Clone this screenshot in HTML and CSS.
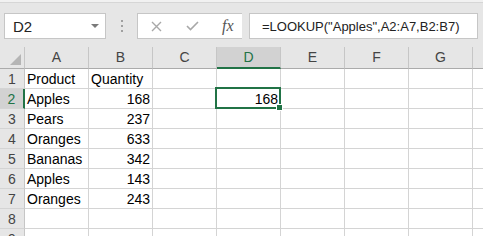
FILE: index.html
```html
<!DOCTYPE html>
<html lang="en">

<head>
  <meta charset="UTF-8" />
  <title>LOOKUP - Excel</title>
  <link rel="stylesheet" href="styles.css">
</head>

<body>
  <!-- formula bar -->
  <div class="toolbar">
    <div class="name-box">
      <span>D2</span>
      <span class="caret"></span>
    </div>
    <div class="grip"><i></i><i></i><i></i></div>
    <div class="fx-box">
      <svg class="btn-cancel" width="11" height="11" viewBox="0 0 11 11">
        <path d="M1 1 L10 10 M10 1 L1 10" stroke="#a8a8a8" stroke-width="1.4" fill="none" />
      </svg>
      <svg class="btn-enter" width="13" height="10" viewBox="0 0 13 10">
        <path d="M1 5 L4.5 8.5 L12 1" stroke="#a8a8a8" stroke-width="1.6" fill="none" />
      </svg>
      <span class="fx">fx</span>
    </div>
    <div class="formula">=LOOKUP("Apples",A2:A7,B2:B7)</div>
  </div>

  <!-- sheet -->
  <div class="sheet">
    <div class="corner">
      <svg width="11" height="11" viewBox="0 0 11 11"><path d="M11 0 L11 11 L0 11 Z" fill="#b5b5b5" /></svg>
    </div>
    <div class="col-head">A</div>
    <div class="col-head">B</div>
    <div class="col-head">C</div>
    <div class="col-head active">D</div>
    <div class="col-head">E</div>
    <div class="col-head">F</div>
    <div class="col-head">G</div>
    <div class="col-head"></div>

    <div class="row-head">1</div>
    <div class="cell">Product</div>
    <div class="cell">Quantity</div>
    <div class="cell"></div><div class="cell"></div><div class="cell"></div><div class="cell"></div><div class="cell"></div><div class="cell"></div>

    <div class="row-head active">2</div>
    <div class="cell">Apples</div>
    <div class="cell num">168</div>
    <div class="cell"></div>
    <div class="cell num selected">168</div>
    <div class="cell"></div><div class="cell"></div><div class="cell"></div><div class="cell"></div>

    <div class="row-head">3</div>
    <div class="cell">Pears</div>
    <div class="cell num">237</div>
    <div class="cell"></div><div class="cell"></div><div class="cell"></div><div class="cell"></div><div class="cell"></div><div class="cell"></div>

    <div class="row-head">4</div>
    <div class="cell">Oranges</div>
    <div class="cell num">633</div>
    <div class="cell"></div><div class="cell"></div><div class="cell"></div><div class="cell"></div><div class="cell"></div><div class="cell"></div>

    <div class="row-head">5</div>
    <div class="cell">Bananas</div>
    <div class="cell num">342</div>
    <div class="cell"></div><div class="cell"></div><div class="cell"></div><div class="cell"></div><div class="cell"></div><div class="cell"></div>

    <div class="row-head">6</div>
    <div class="cell">Apples</div>
    <div class="cell num">143</div>
    <div class="cell"></div><div class="cell"></div><div class="cell"></div><div class="cell"></div><div class="cell"></div><div class="cell"></div>

    <div class="row-head">7</div>
    <div class="cell">Oranges</div>
    <div class="cell num">243</div>
    <div class="cell"></div><div class="cell"></div><div class="cell"></div><div class="cell"></div><div class="cell"></div><div class="cell"></div>

    <div class="row-head">8</div>
    <div class="cell"></div><div class="cell"></div><div class="cell"></div><div class="cell"></div><div class="cell"></div><div class="cell"></div><div class="cell"></div><div class="cell"></div>

    <div class="row-head">9</div>
    <div class="cell"></div><div class="cell"></div><div class="cell"></div><div class="cell"></div><div class="cell"></div><div class="cell"></div><div class="cell"></div><div class="cell"></div>
  </div>
</body>

</html>
```

FILE: styles.css
```css
body {
  margin: 0;
  background-color: #ffffff;
  font-family: "Liberation Sans", Arial, sans-serif;
  color: #000;
}

/* formula bar */
.toolbar {
  display: flex;
  align-items: flex-start;
  height: 47px;
  box-sizing: border-box;
  padding-top: 13px;
  background: linear-gradient(#f1f1f1 0 2px, #d6d6d6 2px 3px, #e6e6e6 3px);
}

.name-box {
  position: relative;
  display: flex;
  align-items: center;
  margin-left: 4px;
  width: 102px;
  height: 26px;
  box-sizing: border-box;
  padding-left: 8px;
  background-color: #fff;
  border: 1px solid #c6c6c6;
  font-size: 15px;
  color: #222;
}

.caret {
  margin-left: auto;
  margin-right: 6px;
  width: 0;
  height: 0;
  border-left: 4px solid transparent;
  border-right: 4px solid transparent;
  border-top: 4px solid #7a7a7a;
}

.grip {
  display: flex;
  flex-direction: column;
  gap: 3px;
  margin: 7px 14px 0 15px;
}

.grip i {
  display: block;
  width: 2px;
  height: 2px;
  background-color: #a0a0a0;
}

.fx-box {
  display: flex;
  align-items: center;
  width: 105px;
  height: 26px;
  box-sizing: border-box;
  padding-left: 13px;
  background-color: #fff;
  border: 1px solid #c6c6c6;
  border-right: none;
}

.btn-cancel {
  margin-right: 24px;
}

.btn-enter {
  margin-right: 23px;
}

.fx {
  font-family: "Liberation Serif", serif;
  font-style: italic;
  font-size: 16px;
  color: #555;
}

.formula {
  width: 229px;
  height: 26px;
  box-sizing: border-box;
  margin-left: 7px;
  padding-left: 12px;
  line-height: 25px;
  background-color: #fff;
  border: 1px solid #c6c6c6;
  font-size: 13px;
  color: #222;
  white-space: nowrap;
}

/* grid */
.sheet {
  display: grid;
  grid-template-columns: 25px repeat(7, 64px) 11px;
  grid-template-rows: 22px repeat(9, 20px);
  height: 189px;
  overflow: hidden;
  font-size: 14px;
}

.corner,
.col-head,
.row-head {
  box-sizing: border-box;
  background-color: #e6e6e6;
  color: #444;
}

.corner {
  display: flex;
  align-items: flex-end;
  justify-content: flex-end;
  padding: 0 3px 3px 0;
  border-right: 1px solid #c6c6c6;
  border-bottom: 1px solid #ababab;
}

.col-head {
  text-align: center;
  line-height: 21px;
  border-right: 1px solid #c6c6c6;
  border-bottom: 1px solid #ababab;
}

.col-head.active {
  background-color: #d2d2d2;
  color: #217346;
  border-bottom: 2px solid #217346;
}

.row-head {
  text-align: center;
  line-height: 21px;
  overflow: hidden;
  border-right: 1px solid #c6c6c6;
  border-bottom: 1px solid #d4d4d4;
}

.row-head.active {
  background-color: #d2d2d2;
  color: #217346;
  border-right: 2px solid #217346;
}

.cell {
  box-sizing: border-box;
  padding: 0 2px;
  line-height: 21px;
  white-space: nowrap;
  border-right: 1px solid #d4d4d4;
  border-bottom: 1px solid #d4d4d4;
}

.num {
  text-align: right;
}

.selected {
  position: relative;
}

.selected::before {
  content: "";
  position: absolute;
  left: -2px;
  top: -2px;
  right: -1px;
  bottom: -1px;
  border: 2px solid #217346;
}

.selected::after {
  content: "";
  position: absolute;
  right: -3px;
  bottom: -3px;
  width: 5px;
  height: 5px;
  background-color: #217346;
  border: 1px solid #fff;
}
```
